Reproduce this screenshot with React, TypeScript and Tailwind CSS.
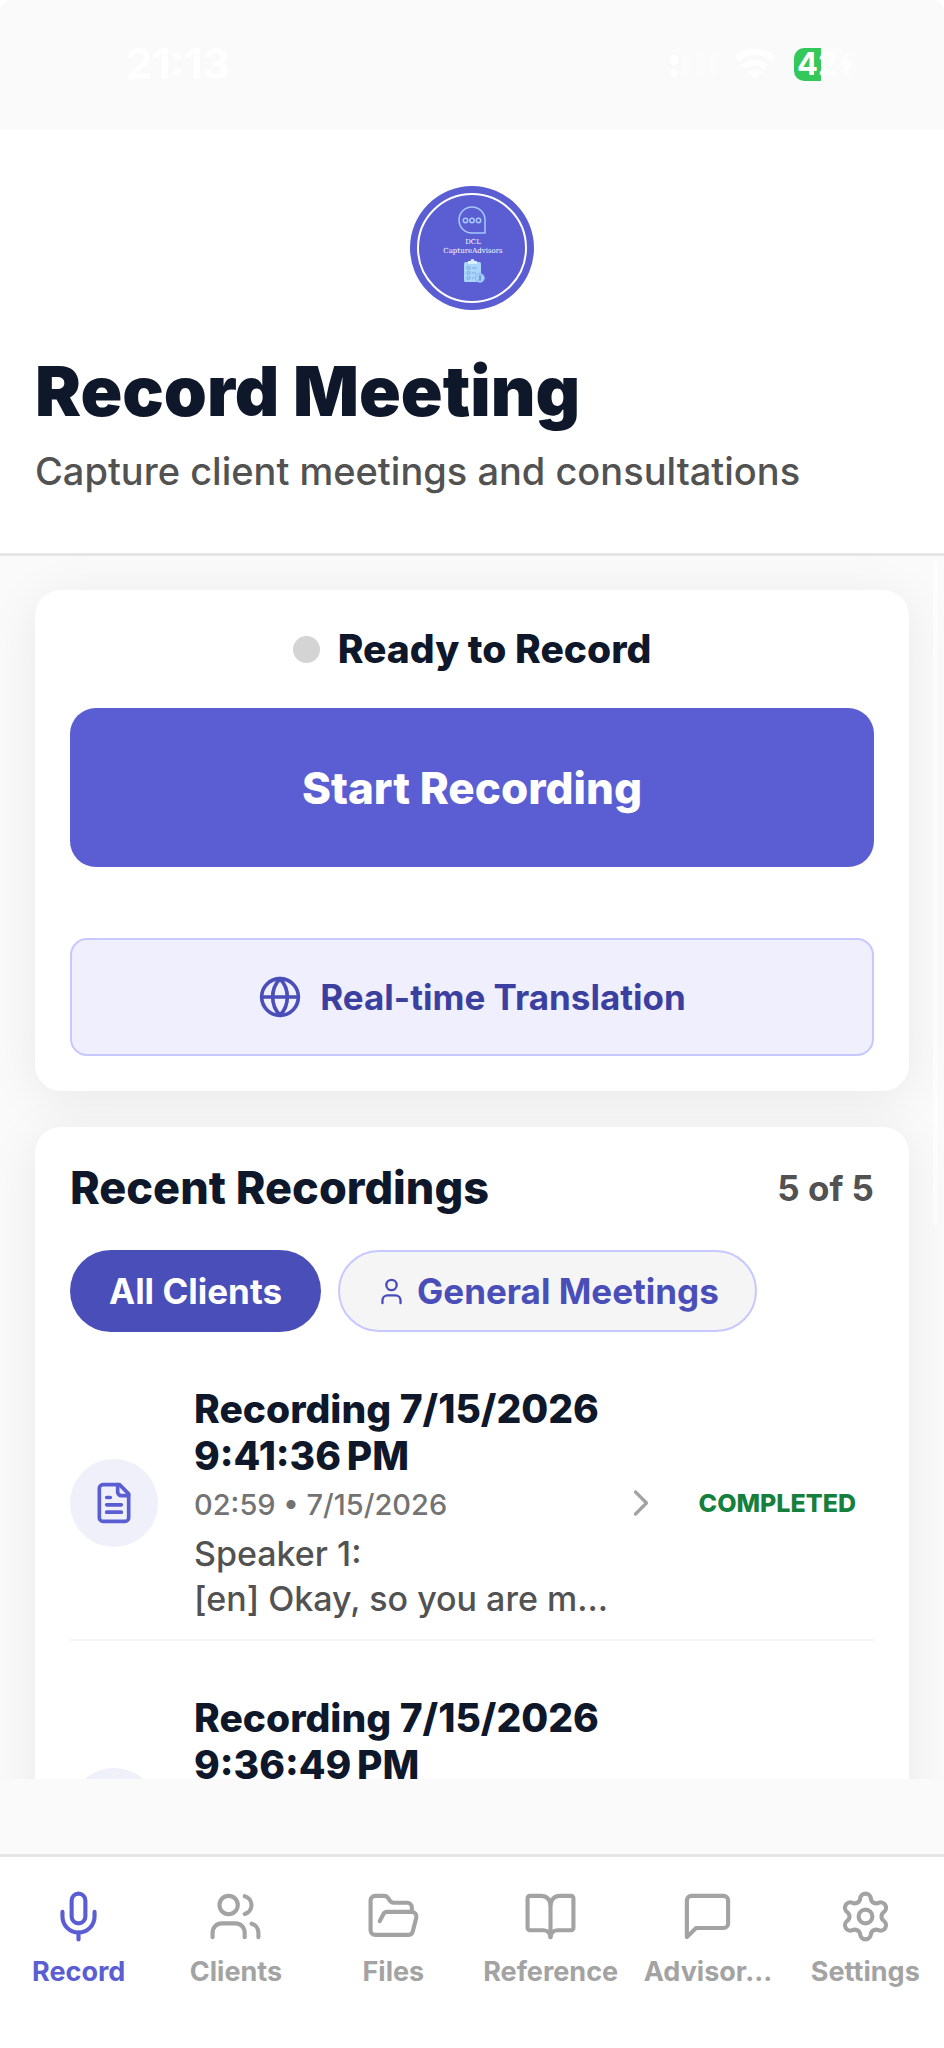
import { useState } from "react";
import type { ReactNode } from "react";
import {
  BookOpen,
  ChevronRight,
  FolderOpen,
  Globe,
  Mic,
  Settings,
  User,
  Users,
} from "lucide-react";

type Recording = {
  id: number;
  date: string;
  time: string;
  duration?: string;
  preview: string[];
};

const recordings: Recording[] = [
  {
    id: 1,
    date: "7/15/2026",
    time: "9:41:36\u202fPM",
    duration: "02:59",
    preview: ["Speaker 1:", "[en] Okay, so you are m..."],
  },
  {
    id: 2,
    date: "7/15/2026",
    time: "9:36:49\u202fPM",
    preview: [],
  },
];

const MessageIcon = () => (
  <svg
    className="size-[55px]"
    viewBox="0 0 24 24"
    fill="none"
    stroke="currentColor"
    strokeWidth="1.8"
    strokeLinecap="round"
    strokeLinejoin="round"
    aria-hidden="true"
  >
    <path d="M21 15a2 2 0 0 1-2 2H7l-4 4V5a2 2 0 0 1 2-2h14a2 2 0 0 1 2 2z" />
  </svg>
);

const FileIcon = () => (
  <svg
    className="size-11"
    viewBox="0 0 24 24"
    fill="none"
    stroke="currentColor"
    strokeWidth="2"
    strokeLinecap="round"
    strokeLinejoin="round"
    aria-hidden="true"
  >
    <path d="M15 2H6a2 2 0 0 0-2 2v16a2 2 0 0 0 2 2h12a2 2 0 0 0 2-2V7Z" />
    <path d="M14 2v4a2 2 0 0 0 2 2h4" />
    <path d="M10 9H8M16 13H8M16 17H8" />
  </svg>
);

const tabs: { name: string; icon: ReactNode }[] = [
  { name: "Record", icon: <Mic className="size-[55px]" strokeWidth={1.8} /> },
  { name: "Clients", icon: <Users className="size-[55px]" strokeWidth={1.8} /> },
  { name: "Files", icon: <FolderOpen className="size-[55px]" strokeWidth={1.8} /> },
  { name: "Reference", icon: <BookOpen className="size-[55px]" strokeWidth={1.8} /> },
  { name: "Advisor...", icon: <MessageIcon /> },
  { name: "Settings", icon: <Settings className="size-[55px]" strokeWidth={1.8} /> },
];

const StatusBar = () => (
  <div className="shrink-0 bg-white">
    <div className="flex h-[130px] items-center justify-between rounded-t-[12px] bg-[#fafafa] pr-[88px] pb-0.5 pl-[126px] text-white">
      <span className="text-[42px] leading-[44px] font-bold">21:13</span>
      <div className="flex items-center gap-[18px]">
        {/* Signal */}
        <svg className="h-7 w-[46px]" viewBox="0 0 46 28" fill="currentColor" aria-hidden="true">
          <rect x="0" y="5" width="8" height="10" rx="4" />
          <rect x="0" y="19" width="8" height="8" rx="4" />
          <g opacity="0.2">
            <rect x="13" y="4" width="7" height="23" rx="3" />
            <rect x="26" y="2" width="7" height="25" rx="3" />
            <rect x="39" y="0" width="7" height="27" rx="3" />
          </g>
        </svg>
        {/* Wifi */}
        <svg className="h-8 w-[42px]" viewBox="0 0 42 32" fill="none" stroke="currentColor" strokeWidth="6" aria-hidden="true">
          <path d="M3 11a26 26 0 0 1 36 0M10 19a16 16 0 0 1 22 0" />
          <path d="M14 24a10 10 0 0 1 14 0l-7 7z" fill="currentColor" stroke="none" />
        </svg>
        {/* Battery */}
        <div className="flex h-[33px] w-[62px] items-center overflow-hidden rounded-[10px] bg-linear-to-r from-[#34c759] from-43% to-[#fbfbfb] to-43% pl-[3px]">
          <span className="text-[31px] leading-8 font-bold">42</span>
          <svg className="h-6 w-4" viewBox="0 0 16 24" fill="currentColor" aria-hidden="true">
            <path d="M10 0 1 13h6l-1 11 9-14H9z" />
          </svg>
        </div>
      </div>
    </div>
  </div>
);

const Logo = () => (
  <svg className="mx-auto size-[124px]" viewBox="0 0 124 124" role="img" aria-label="DCL CaptureAdvisors">
    <circle cx="62" cy="62" r="62" fill="#5b5ed3" />
    <circle cx="62" cy="62" r="54" fill="none" stroke="#fff" strokeWidth="2" />
    <g fill="none" stroke="#a5c9fa" strokeWidth="1.5">
      <path d="M75 47H62a13 13 0 1 1 13-13z" strokeLinejoin="round" />
      <circle cx="55.5" cy="34.5" r="2.2" />
      <circle cx="62" cy="34.5" r="2.2" />
      <circle cx="68.5" cy="34.5" r="2.2" />
    </g>
    <g fill="#fff" textAnchor="middle" fontFamily="DejaVu Serif, serif" fontSize="7">
      <text x="63" y="58">DCL</text>
      <text x="63" y="67">CaptureAdvisors</text>
    </g>
    <rect x="54" y="76" width="17" height="20" rx="1.5" fill="#a9d5fb" />
    <path d="M58 78v-3h2.5a2 2 0 0 1 4 0H67v3z" fill="#d8efff" />
    <g fill="none" stroke="#7fa3ec" strokeWidth="1">
      <circle cx="58.5" cy="82" r="1.5" />
      <circle cx="58.5" cy="87" r="1.5" />
      <circle cx="58.5" cy="92" r="1.5" />
      <path d="M62 82h5M62 87h4M62 92h2" />
    </g>
    <circle cx="70" cy="92" r="4.5" fill="#a9d5fb" stroke="#7fa3ec" strokeWidth="0.8" />
    <path d="M71.5 90.2h-2a1 1 0 0 0 0 1.8h1a1 1 0 0 1 0 1.8h-2M70 89v6" fill="none" stroke="#5b7fe0" strokeWidth="0.8" />
  </svg>
);

const RecordingRow = ({ recording }: { recording: Recording }) => (
  <li className="flex min-h-[274px] items-center border-b-2 border-[#f5f5f5]">
    <div className="flex size-[88px] shrink-0 items-center justify-center rounded-full bg-[#f0f0fb] text-[#5b5ed3]">
      <FileIcon />
    </div>
    <div className="ml-9 min-h-[236px] min-w-0 flex-1">
      <h3 className="text-[39px] leading-[47px] font-extrabold whitespace-nowrap text-[#0f172a]">
        Recording {recording.date}
        <br />
        {recording.time}
      </h3>
      {recording.duration && (
        <p className="mt-1 text-[29px] leading-[44px] font-medium text-[#737373]">
          {recording.duration} • {recording.date}
        </p>
      )}
      <div className="mt-1 text-[34px] leading-[45px] font-medium whitespace-nowrap text-[#525252]">
        {recording.preview.map((line) => (
          <p key={line}>{line}</p>
        ))}
      </div>
    </div>
    {recording.duration && (
      <>
        <ChevronRight className="mr-[18px] size-11 shrink-0 text-[#a3a3a3]" strokeWidth={1.8} />
        <span className="px-[18px] text-[25px] leading-8 font-extrabold text-[#15803d]">COMPLETED</span>
      </>
    )}
  </li>
);

export default function App() {
  const [activeTab, setActiveTab] = useState("Record");

  return (
    <div className="flex h-screen flex-col bg-[#fafafa] font-['Inter','Liberation_Sans',sans-serif]">
      <StatusBar />

      <header className="shrink-0 border-b-[3px] border-[#e5e5e5] bg-white px-[35px] pt-14 pb-[55px]">
        <Logo />
        <h1 className="mt-10 text-[69px] leading-[82px] font-black text-[#0f172a]">Record Meeting</h1>
        <p className="mt-3 text-[38px] leading-[54px] font-medium text-[#525252]">
          Capture client meetings and consultations
        </p>
      </header>

      <main className="relative min-h-0 flex-1 overflow-hidden px-[35px] pt-[34px]">
        <section className="rounded-[26px] bg-white p-[35px] shadow-[0_8px_52px_rgba(0,0,0,0.07)]">
          <div className="flex items-center justify-center gap-[18px]">
            <span className="size-[27px] rounded-full bg-[#d4d4d4]" />
            <h2 className="text-[39px] leading-[48px] font-extrabold text-[#0f172a]">Ready to Record</h2>
          </div>
          <button
            type="button"
            className="mt-[35px] h-[159px] w-full rounded-[26px] bg-[#5b5ed3] text-[44px] font-extrabold text-white"
          >
            Start Recording
          </button>
          <button
            type="button"
            className="mt-[71px] flex h-[118px] w-full items-center justify-center gap-[18px] rounded-[17px] border-2 border-[#c7c8ff] bg-[#f0effe] text-[35px] font-bold text-[#3b3f9f]"
          >
            <Globe className="size-11 text-[#4a4eb8]" />
            Real-time Translation
          </button>
        </section>

        <section className="mt-9 rounded-[26px] bg-white p-[35px] shadow-[0_8px_52px_rgba(0,0,0,0.07)]">
          <div className="flex h-[52px] items-center justify-between">
            <h2 className="text-[45px] leading-[52px] font-extrabold text-[#0f172a]">Recent Recordings</h2>
            <span className="text-[35px] leading-[44px] font-bold text-[#525252]">5 of 5</span>
          </div>

          {/* Client filters */}
          <div className="mt-9 flex gap-[17px]">
            <button type="button" className="h-[82px] rounded-full bg-[#4a4eb8] px-[39px] text-[35px] font-bold text-white">
              All Clients
            </button>
            <button
              type="button"
              className="flex h-[82px] items-center gap-2.5 rounded-full border-2 border-[#c7c8ff] bg-[#f5f5f5] px-9 text-[35px] font-bold text-[#4a4eb8]"
            >
              <User className="size-[31px]" strokeWidth={1.8} />
              General Meetings
            </button>
          </div>

          <ul className="mt-[35px] flex flex-col gap-[35px]">
            {recordings.map((recording) => (
              <RecordingRow key={recording.id} recording={recording} />
            ))}
          </ul>
        </section>

        {/* Scroll indicator */}
        <div className="absolute top-1 right-1.5 h-[665px] w-[5px] rounded-full bg-white/50" />
      </main>

      <nav className="mt-[75px] grid h-[194px] shrink-0 grid-cols-6 border-t-[3px] border-[#e5e5e5] bg-white pt-8">
        {tabs.map((tab) => (
          <button
            key={tab.name}
            type="button"
            onClick={() => setActiveTab(tab.name)}
            className={`flex flex-col items-center gap-3 text-[27px] leading-8 font-bold ${
              activeTab === tab.name ? "text-[#5b5ed3]" : "text-[#a3a3a3]"
            }`}
          >
            {tab.icon}
            <span>{tab.name}</span>
          </button>
        ))}
      </nav>
    </div>
  );
}
